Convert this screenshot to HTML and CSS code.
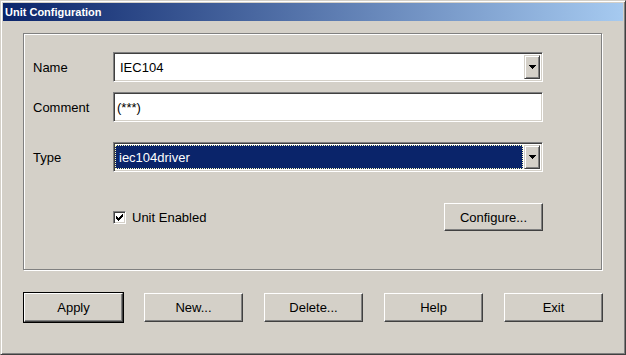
FILE: index.html
```html
<!DOCTYPE html>
<html lang="en">
<head>
  <meta charset="UTF-8" />
  <title>Unit Configuration</title>
  <link rel="stylesheet" href="styles.css">
</head>
<body>
  <div class="window">
    <div class="titlebar">Unit Configuration</div>

    <div class="group">
      <div class="row">
        <span class="label">Name</span>
        <div class="field combo">
          <span class="value">IEC104</span>
          <span class="drop"><svg width="7" height="4" viewBox="0 0 7 4" shape-rendering="crispEdges"><path d="M0 0h7v1h-7z M1 1h5v1h-5z M2 2h3v1h-3z M3 3h1v1h-1z" fill="#000"/></svg></span>
        </div>
      </div>

      <div class="row">
        <span class="label">Comment</span>
        <div class="field edit">
          <span class="value">(***)</span>
        </div>
      </div>

      <div class="row row-type">
        <span class="label">Type</span>
        <div class="field combo">
          <span class="value selected">iec104driver</span>
          <span class="drop"><svg width="7" height="4" viewBox="0 0 7 4" shape-rendering="crispEdges"><path d="M0 0h7v1h-7z M1 1h5v1h-5z M2 2h3v1h-3z M3 3h1v1h-1z" fill="#000"/></svg></span>
        </div>
      </div>

      <div class="row row-check">
        <label class="check">
          <span class="box"><svg width="13" height="13" viewBox="0 0 13 13" shape-rendering="crispEdges"><path d="M3 5v3h1v-3z M4 6v3h1v-3z M5 7v3h1v-3z M6 6v3h1v-3z M7 5v3h1v-3z M8 4v3h1v-3z M9 3v3h1v-3z" fill="#000"/></svg></span>
          Unit Enabled
        </label>
        <button class="btn btn-small">Configure...</button>
      </div>
    </div>

    <div class="buttons">
      <button class="btn default">Apply</button>
      <button class="btn">New...</button>
      <button class="btn">Delete...</button>
      <button class="btn">Help</button>
      <button class="btn">Exit</button>
    </div>
  </div>
</body>
</html>
```

FILE: styles.css
```css
* {
  margin: 0;
  padding: 0;
  box-sizing: border-box;
}

body {
  font-family: 'Liberation Sans', Arial, sans-serif;
  font-size: 13px;
  color: #000;
  background: #d4d0c8;
}

.window {
  width: 626px;
  height: 355px;
  background: #d4d0c8;
  border: 1px solid;
  border-color: #d4d0c8 #404040 #404040 #d4d0c8;
  box-shadow: inset 1px 1px #fff, inset -1px -1px #808080;
  padding: 2px;
}

.titlebar {
  height: 18px;
  background: linear-gradient(90deg, #0a246a, #a6caf0);
  color: #fff;
  font-weight: 700;
  font-size: 11px;
  line-height: 18px;
  padding-left: 2px;
}

.group {
  margin: 12px 0 0 20px;
  width: 579px;
  height: 237px;
  border: 1px solid #808080;
  box-shadow: 1px 1px #fff, inset 1px 1px #fff;
  padding: 18px 0 0 9px;
}

.row {
  display: flex;
  align-items: center;
  margin-bottom: 10px;
}

.row-type {
  margin-top: 20px;
}

.row-check {
  margin-top: 31px;
  padding-left: 80px;
  width: 510px;
  justify-content: space-between;
}

.label {
  width: 80px;
}

.field {
  width: 430px;
  height: 30px;
  background: #fff;
  border: 1px solid;
  border-color: #808080 #fff #fff #808080;
  box-shadow: inset 1px 1px #404040, inset -1px -1px #d4d0c8;
  padding: 2px;
  display: flex;
  align-items: stretch;
}

.value {
  flex: 1;
  display: flex;
  align-items: center;
  padding-left: 4px;
}

.edit .value {
  padding-left: 1px;
}

.value.selected {
  background: #0a246a;
  color: #fff;
  outline: 1px dotted #ffffc0;
  outline-offset: -1px;
  margin: 0 1px 0 -1px;
}

.drop {
  width: 16px;
  background: #d4d0c8;
  border: 1px solid;
  border-color: #d4d0c8 #404040 #404040 #d4d0c8;
  box-shadow: inset 1px 1px #fff, inset -1px -1px #808080;
  display: flex;
  align-items: center;
  justify-content: center;
}

.drop svg {
  display: block;
}

.check {
  display: flex;
  align-items: center;
  gap: 6px;
}

.box {
  width: 13px;
  height: 13px;
  background: #fff;
  border: 1px solid;
  border-color: #808080 #fff #fff #808080;
  box-shadow: inset 1px 1px #404040, inset -1px -1px #d4d0c8;
  position: relative;
}

.box svg {
  position: absolute;
  left: -1px;
  top: -1px;
}

.buttons {
  display: flex;
  gap: 21px;
  margin-top: 23px;
  padding-left: 21px;
}

.btn {
  width: 99px;
  height: 29px;
  font-family: 'Liberation Sans', Arial, sans-serif;
  font-size: 13px;
  color: #000;
  background: #d4d0c8;
  border: 1px solid;
  border-color: #fff #404040 #404040 #fff;
  box-shadow: inset -1px -1px #808080, inset 1px 1px #d4d0c8;
}

.btn-small {
  height: 28px;
}

.default {
  outline: 1px solid #000;
}
```
